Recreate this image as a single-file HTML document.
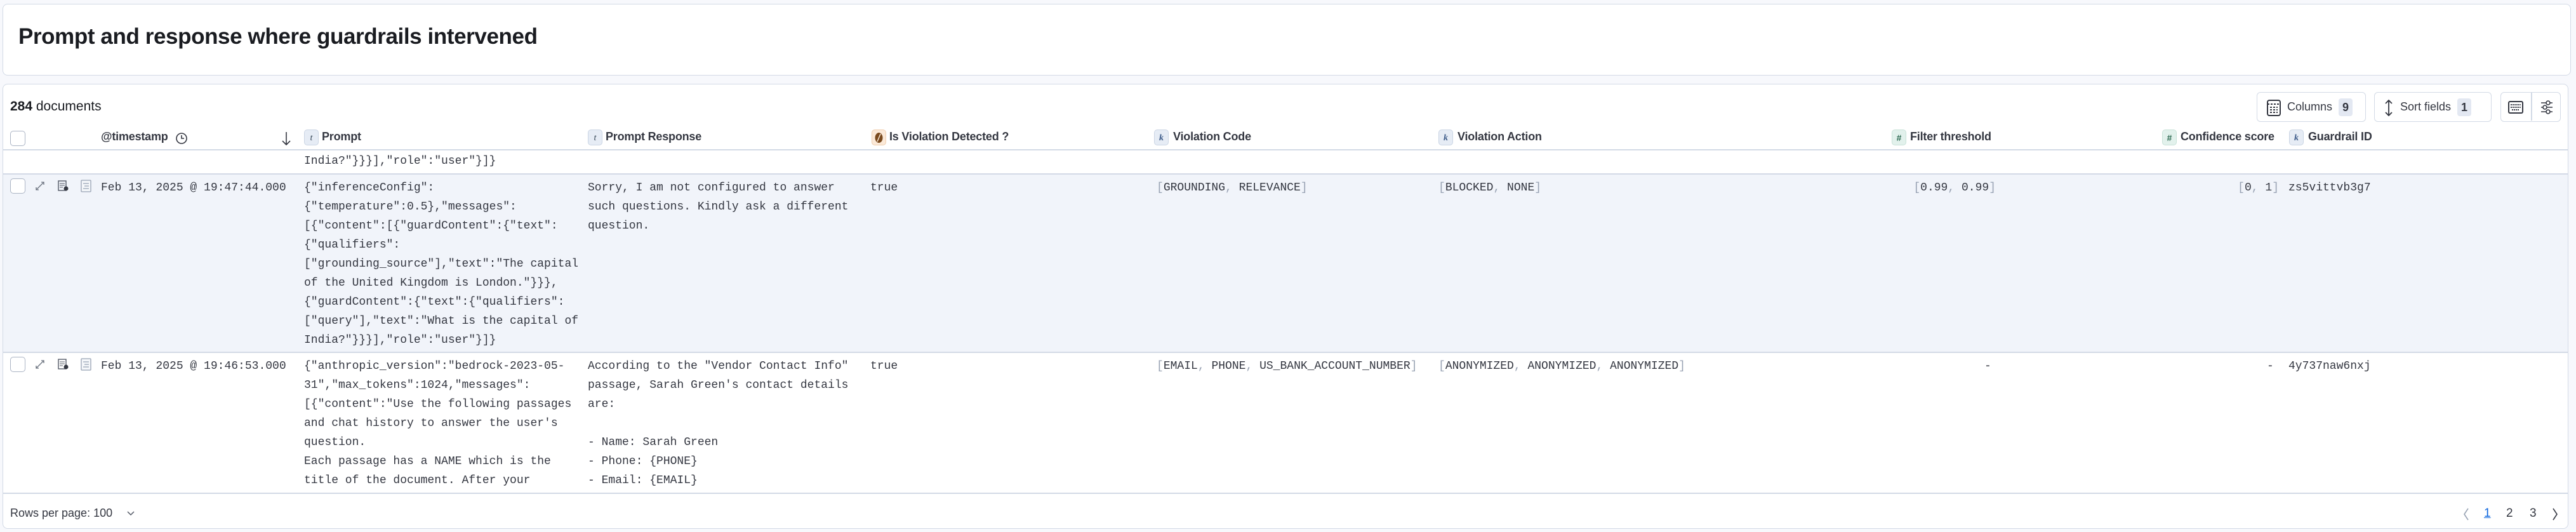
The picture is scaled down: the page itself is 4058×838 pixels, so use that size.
<!DOCTYPE html>
<html><head><meta charset="utf-8"><style>
*{box-sizing:border-box;margin:0;padding:0}
body{width:4058px;height:838px;background:#f7f8fc;font-family:"Liberation Sans",sans-serif;color:#1a1c21;position:relative;overflow:hidden}
.a{position:absolute}
.panel{position:absolute;background:#fff;border:1.5px solid #d3dae6;border-radius:8px}
.h{font-weight:700;font-size:18px;color:#343741;top:205px;white-space:nowrap;letter-spacing:-0.2px}
.badge{position:absolute;width:23px;height:25px;border-radius:5px;top:204px;font:italic 14px "Liberation Serif",serif;text-align:center;line-height:25px}
.bt{background:#e6ecf5;border:1px solid #cbd5e4;color:#345}
.bk{background:#e6ecf5;border:1px solid #cbd5e4;color:#3e5c8a;font-weight:700}
.bn{background:#e2f1ec;border:1px solid #c8e2d8;color:#2d6a52;font-style:normal;font-family:"Liberation Sans";font-weight:700}
.bb{background:#fbe9d8;border:1px solid #efcfb0}
.m{font-family:"Liberation Mono",monospace;font-size:18px;line-height:30px;color:#343741;white-space:pre}
.br{color:#98a2b3}
.hr{position:absolute;left:5px;width:4040px;height:2px;background:#d3dae6}
.cb{position:absolute;width:24px;height:24px;border:1.5px solid #abb4c4;border-radius:5px;background:#fff;left:16px}
.btn{position:absolute;top:145px;height:47px;border:1.5px solid #d3dae6;border-radius:6px;background:#fff;font-size:18px;color:#343741;line-height:44px}
.cnt{display:inline-block;background:#e3e8f2;border-radius:4px;padding:0 6px;line-height:28px;font-weight:700;margin-left:10px;vertical-align:middle}
</style></head><body>
<div class="panel" style="left:4px;top:6px;width:4046px;height:113px"></div>
<div class="a" style="left:29px;top:38px;font-size:35px;font-weight:700;color:#1a1c21;letter-spacing:-0.4px">Prompt and response where guardrails intervened</div>

<div class="panel" style="left:4px;top:132px;width:4042px;height:701px;overflow:hidden">
</div>
<div class="a" style="left:16px;top:156px;font-size:21px;color:#1a1c21"><b>284</b> documents</div>

<div class="btn" style="left:3555px;width:172px"><svg class="a" style="left:14px;top:10px" width="24" height="28" viewBox="0 0 24 28"><rect x="2" y="2" width="20" height="24" rx="3" fill="none" stroke="#343741" stroke-width="2"/><path d="M2 8h20M6 13h12M6 17h12M6 21h12" stroke="#343741" stroke-width="2" stroke-dasharray="3 2"/></svg><span class="a" style="left:47px;top:0">Columns<span class="cnt">9</span></span></div>
<div class="btn" style="left:3740px;width:185px"><svg class="a" style="left:14px;top:10px" width="16" height="28" viewBox="0 0 16 28"><path d="M8 2v24M3 7l5-5 5 5M3 21l5 5 5-5" fill="none" stroke="#343741" stroke-width="1.8"/></svg><span class="a" style="left:40px;top:0">Sort fields<span class="cnt">1</span></span></div>
<div class="btn" style="left:3939px;width:95px"><div class="a" style="left:47px;top:0;width:1.5px;height:44px;background:#d3dae6"></div>
<svg class="a" style="left:11px;top:11px" width="24" height="24" viewBox="0 0 24 24"><rect x="1" y="3" width="22" height="18" rx="2" fill="none" stroke="#343741" stroke-width="2"/><path d="M4 8h16M4 12h16M6 16h12" stroke="#343741" stroke-width="2" stroke-dasharray="2 1"/></svg>
<svg class="a" style="left:61px;top:10px" width="22" height="26" viewBox="0 0 22 26"><path d="M2 6h18M2 13h18M2 20h18" stroke="#343741" stroke-width="1.6"/><circle cx="13" cy="6" r="3" fill="#fff" stroke="#343741" stroke-width="1.6"/><circle cx="8" cy="13" r="3" fill="#fff" stroke="#343741" stroke-width="1.6"/><circle cx="13" cy="20" r="3" fill="#fff" stroke="#343741" stroke-width="1.6"/></svg></div>

<!-- header -->
<div class="cb" style="top:206px"></div>
<div class="a h" style="left:159px">@timestamp</div>
<svg class="a" style="left:276px;top:207px" width="20" height="22" viewBox="0 0 20 22"><circle cx="10" cy="11" r="8" fill="none" stroke="#343741" stroke-width="1.6"/><path d="M10 6v5h4" fill="none" stroke="#343741" stroke-width="1.6"/></svg>
<svg class="a" style="left:443px;top:206px" width="16" height="24" viewBox="0 0 16 24"><path d="M8 2v20M2 16l6 6 6-6" fill="none" stroke="#343741" stroke-width="1.6"/></svg>
<div class="badge bt" style="left:479px">t</div><div class="a h" style="left:507px">Prompt</div>
<div class="badge bt" style="left:926px">t</div><div class="a h" style="left:954px">Prompt Response</div>
<div class="badge bb" style="left:1373px"><svg width="15" height="18" viewBox="0 0 15 18" style="margin-top:3px"><ellipse cx="7.5" cy="9" rx="6" ry="8" fill="#7a4a1e"/><path d="M10 3L5 15" stroke="#fbe9d8" stroke-width="1.5"/></svg></div><div class="a h" style="left:1401px">Is Violation Detected ?</div>
<div class="badge bk" style="left:1818px">k</div><div class="a h" style="left:1848px">Violation Code</div>
<div class="badge bk" style="left:2266px">k</div><div class="a h" style="left:2296px">Violation Action</div>
<div class="badge bn" style="left:2980px">#</div><div class="a h" style="left:3009px">Filter threshold</div>
<div class="badge bn" style="left:3406px">#</div><div class="a h" style="left:3435px">Confidence score</div>
<div class="badge bk" style="left:3606px">k</div><div class="a h" style="left:3636px">Guardrail ID</div>
<div class="hr" style="top:235px"></div>

<!-- row1 -->
<div class="a m" style="left:479px;top:239px">India?"}}}],"role":"user"}]}</div>
<div class="hr" style="top:273px"></div>

<!-- row2 -->
<div class="a" style="left:5px;top:275px;width:4040px;height:279px;background:#f1f4fa"></div>
<div class="cb" style="top:281px"></div>
<svg class="a" style="left:54px;top:284px" width="18" height="18" viewBox="0 0 18 18"><path d="M3 15L15 3M11 3h4v4M3 11v4h4" fill="none" stroke="#69707d" stroke-width="1.3"/></svg>
<svg class="a" style="left:91px;top:284px" width="18" height="18" viewBox="0 0 18 18"><rect x="1" y="1" width="12" height="15" fill="none" stroke="#535966" stroke-width="1.4"/><path d="M3 5h8M3 8h8M3 11h5" stroke="#535966" stroke-width="1.1"/><circle cx="13" cy="13" r="3.5" fill="#343741"/></svg>
<svg class="a" style="left:127px;top:283px" width="18" height="20" viewBox="0 0 18 20"><rect x="1" y="1" width="15" height="18" rx="1" fill="#f5f7fa" stroke="#98a2b3" stroke-width="1.3"/><path d="M4 6h9M6 10h7M4 14h9" stroke="#98a2b3" stroke-width="1.2"/></svg>
<div class="a m" style="left:159px;top:281px">Feb 13, 2025 @ 19:47:44.000</div>
<div class="a m" style="left:479px;top:281px">{"inferenceConfig":
{"temperature":0.5},"messages":
[{"content":[{"guardContent":{"text":
{"qualifiers":
["grounding_source"],"text":"The capital
of the United Kingdom is London."}}},
{"guardContent":{"text":{"qualifiers":
["query"],"text":"What is the capital of
India?"}}}],"role":"user"}]}</div>
<div class="a m" style="left:926px;top:281px">Sorry, I am not configured to answer
such questions. Kindly ask a different
question.</div>
<div class="a m" style="left:1371px;top:281px">true</div>
<div class="a m" style="left:1822px;top:281px"><span class="br">[</span>GROUNDING<span class="br">,</span> RELEVANCE<span class="br">]</span></div>
<div class="a m" style="left:2266px;top:281px"><span class="br">[</span>BLOCKED<span class="br">,</span> NONE<span class="br">]</span></div>
<div class="a m" style="right:914px;top:281px"><span class="br">[</span>0.99<span class="br">,</span> 0.99<span class="br">]</span></div>
<div class="a m" style="right:468px;top:281px"><span class="br">[</span>0<span class="br">,</span> 1<span class="br">]</span></div>
<div class="a m" style="left:3605px;top:281px">zs5vittvb3g7</div>
<div class="hr" style="top:554px"></div>

<!-- row3 -->
<div class="a" style="left:5px;top:556px;width:4040px;height:220px;overflow:hidden">
<div class="cb" style="top:6px;left:11px"></div>
<svg class="a" style="left:49px;top:9px" width="18" height="18" viewBox="0 0 18 18"><path d="M3 15L15 3M11 3h4v4M3 11v4h4" fill="none" stroke="#69707d" stroke-width="1.3"/></svg>
<svg class="a" style="left:86px;top:9px" width="18" height="18" viewBox="0 0 18 18"><rect x="1" y="1" width="12" height="15" fill="none" stroke="#535966" stroke-width="1.4"/><path d="M3 5h8M3 8h8M3 11h5" stroke="#535966" stroke-width="1.1"/><circle cx="13" cy="13" r="3.5" fill="#343741"/></svg>
<svg class="a" style="left:122px;top:8px" width="18" height="20" viewBox="0 0 18 20"><rect x="1" y="1" width="15" height="18" rx="1" fill="#f5f7fa" stroke="#98a2b3" stroke-width="1.3"/><path d="M4 6h9M6 10h7M4 14h9" stroke="#98a2b3" stroke-width="1.2"/></svg>
<div class="a m" style="left:154px;top:6px">Feb 13, 2025 @ 19:46:53.000</div>
<div class="a m" style="left:474px;top:6px">{"anthropic_version":"bedrock-2023-05-
31","max_tokens":1024,"messages":
[{"content":"Use the following passages
and chat history to answer the user's
question.
Each passage has a NAME which is the
title of the document. After your
answer, leave a blank line and then</div>
<div class="a m" style="left:921px;top:6px">According to the "Vendor Contact Info"
passage, Sarah Green's contact details
are:

- Name: Sarah Green
- Phone: {PHONE}
- Email: {EMAIL}
- Bank Account: {US_BANK_ACCOUNT_NUMBER}</div>
<div class="a m" style="left:1366px;top:6px">true</div>
<div class="a m" style="left:1817px;top:6px"><span class="br">[</span>EMAIL<span class="br">,</span> PHONE<span class="br">,</span> US_BANK_ACCOUNT_NUMBER<span class="br">]</span></div>
<div class="a m" style="left:2261px;top:6px"><span class="br">[</span>ANONYMIZED<span class="br">,</span> ANONYMIZED<span class="br">,</span> ANONYMIZED<span class="br">]</span></div>
<div class="a m" style="left:3121px;top:6px">-</div>
<div class="a m" style="left:3566px;top:6px">-</div>
<div class="a m" style="left:3600px;top:6px">4y737naw6nxj</div>
</div>
<div class="hr" style="top:776px"></div>

<!-- footer -->
<div class="a" style="left:16px;top:798px;font-size:18px;color:#343741">Rows per page: 100</div>
<svg class="a" style="left:198px;top:802px" width="16" height="14" viewBox="0 0 16 14"><path d="M3 4l5 5 5-5" fill="none" stroke="#535966" stroke-width="1.5"/></svg>
<svg class="a" style="left:3878px;top:798px" width="14" height="24" viewBox="0 0 14 24"><path d="M10 3L4 12l6 9" fill="none" stroke="#98a2b3" stroke-width="1.6"/></svg>
<div class="a" style="left:3913px;top:798px;font-size:19px;color:#0b64dd;text-decoration:underline">1</div>
<div class="a" style="left:3948px;top:798px;font-size:19px;color:#343741">2</div>
<div class="a" style="left:3985px;top:798px;font-size:19px;color:#343741">3</div>
<svg class="a" style="left:4018px;top:798px" width="14" height="24" viewBox="0 0 14 24"><path d="M4 3l6 9-6 9" fill="none" stroke="#343741" stroke-width="1.6"/></svg>
</body></html>
